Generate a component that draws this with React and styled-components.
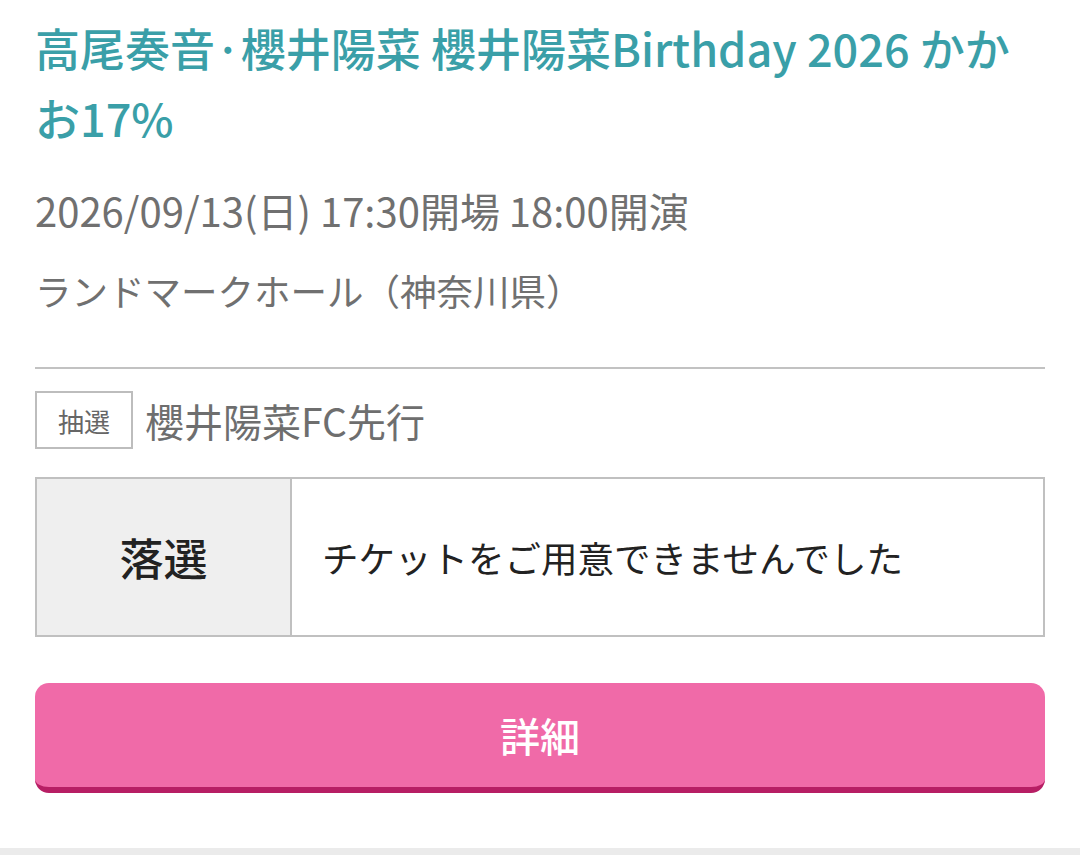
import styled, { createGlobalStyle } from "styled-components";

const GlobalStyle = createGlobalStyle`
  html, body {
    margin: 0;
    padding: 0;
    background: #fff;
  }
  body {
    font-family: "Noto Sans CJK JP", "Noto Sans", sans-serif;
  }
`;

export default function App() {
  return (
    <>
      <GlobalStyle />
      <Card>
        <Title>高尾奏音·櫻井陽菜 櫻井陽菜Birthday 2026 かかお17%</Title>
        <Info $size={40}>2026/09/13(日) 17:30開場 18:00開演</Info>
        <Info $size={36.5}>ランドマークホール（神奈川県）</Info>
        <Divider />
        <SaleRow>
          <Badge>抽選</Badge>
          <SaleName>櫻井陽菜FC先行</SaleName>
        </SaleRow>
        <ResultTable>
          <ResultLabel>落選</ResultLabel>
          <ResultText>チケットをご用意できませんでした</ResultText>
        </ResultTable>
        <DetailButton>詳細</DetailButton>
      </Card>
      <FooterStrip />
    </>
  );
}

const Card = styled.div`
  padding: 13px 35px 55px;
`;

const Title = styled.h1`
  margin: 0;
  font-size: 45px;
  line-height: 70px;
  font-weight: 500;
  color: #3a9fa8;
`;

const Info = styled.p`
  margin: 33px 0 0;
  font-size: ${(p) => p.$size}px;
  line-height: 48px;
  color: #707070;
`;

const Divider = styled.hr`
  margin: 52px 0 0;
  border: 0;
  height: 2px;
  background: #c2c2c2;
`;

const SaleRow = styled.div`
  display: flex;
  align-items: center;
  gap: 12px;
  margin-top: 22px;
`;

const Badge = styled.span`
  box-sizing: border-box;
  display: flex;
  align-items: center;
  justify-content: center;
  width: 98px;
  height: 58px;
  border: 2px solid #bdbdbd;
  font-size: 26px;
  color: #666;
`;

const SaleName = styled.span`
  font-size: 39px;
  color: #6e6e6e;
`;

const ResultTable = styled.div`
  box-sizing: border-box;
  display: flex;
  height: 160px;
  margin-top: 28px;
  border: 2px solid #c0c0c0;
`;

const ResultLabel = styled.div`
  box-sizing: border-box;
  width: 255px;
  display: flex;
  align-items: center;
  justify-content: center;
  background: #efefef;
  border-right: 2px solid #c0c0c0;
  font-size: 44px;
  font-weight: 500;
  color: #222;
`;

const ResultText = styled.div`
  flex: 1;
  display: flex;
  align-items: center;
  padding-left: 30px;
  font-size: 36.5px;
  color: #222;
`;

const DetailButton = styled.button`
  box-sizing: border-box;
  display: flex;
  align-items: center;
  justify-content: center;
  width: 100%;
  height: 110px;
  margin-top: 46px;
  border: 0;
  border-bottom: 6px solid #b71e64;
  border-radius: 14px;
  background: #f06aa8;
  font-family: inherit;
  font-size: 40px;
  font-weight: 500;
  color: #fff;
  cursor: pointer;
`;

const FooterStrip = styled.div`
  height: 20px;
  background: #ebebeb;
`;
